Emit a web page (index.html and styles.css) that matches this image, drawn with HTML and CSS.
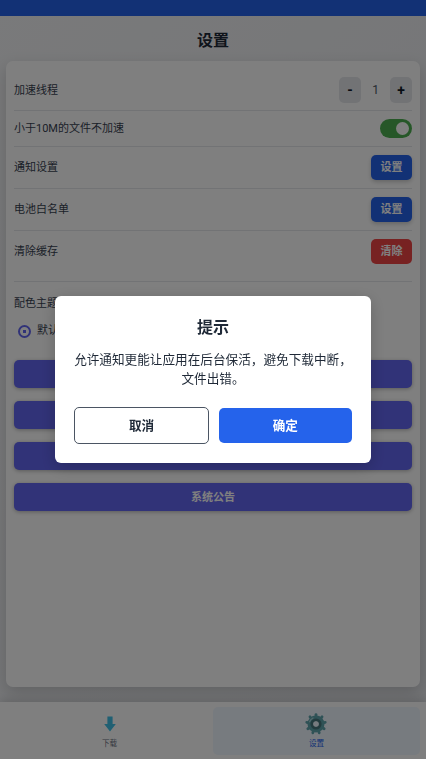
FILE: index.html
```html
<!DOCTYPE html>
<html lang="zh-CN">
<head>
<meta charset="UTF-8">
<meta name="viewport" content="width=device-width, initial-scale=1">
<title>设置</title>
<link rel="stylesheet" href="styles.css">
</head>
<body>
<div class="app">
  <div class="statusbar"></div>
  <header class="header">设置</header>
  <main class="card">
    <div class="row row-threads"><span>加速线程</span>
      <div class="stepper"><button class="step">-</button><span class="value">1</span><button class="step">+</button></div>
    </div>
    <div class="row row-toggle"><span>小于10M的文件不加速</span><div class="toggle"><i></i></div></div>
    <div class="row"><span>通知设置</span><button class="btn">设置</button></div>
    <div class="row"><span>电池白名单</span><button class="btn">设置</button></div>
    <div class="row row-cache"><span>清除缓存</span><button class="btn danger">清除</button></div>
    <section class="theme">
      <div>配色主题</div>
      <div class="option"><span class="radio"></span><span>默认</span></div>
    </section>
    <div class="actions">
      <button class="wide"></button>
      <button class="wide"></button>
      <button class="wide"></button>
      <button class="wide">系统公告</button>
    </div>
  </main>
  <nav class="nav">
    <div class="tab">
      <svg class="icon" viewBox="0 0 24 24"><path fill="#40c0e7" d="M9.400 4.500h5.200v7.600h3.200L12 19.400 6.200 12.100h3.200z"/></svg>
      <span>下载</span>
    </div>
    <div class="tab active">
      <svg class="icon" viewBox="0 0 24 24">
        <g stroke="#5fa5ad" stroke-width="2.800" stroke-linecap="round">
          <path id="tooth" d="M12 5V2.600"/>
          <use href="#tooth" transform="rotate(40 12 12)"/>
          <use href="#tooth" transform="rotate(80 12 12)"/>
          <use href="#tooth" transform="rotate(120 12 12)"/>
          <use href="#tooth" transform="rotate(160 12 12)"/>
          <use href="#tooth" transform="rotate(200 12 12)"/>
          <use href="#tooth" transform="rotate(240 12 12)"/>
          <use href="#tooth" transform="rotate(280 12 12)"/>
          <use href="#tooth" transform="rotate(320 12 12)"/>
        </g>
        <circle cx="12" cy="12" r="6" fill="none" stroke="#5fa5ad" stroke-width="5"/>
        <circle cx="12" cy="12" r="4.200" fill="none" stroke="#46777d" stroke-width="2.800"/>
        <circle cx="12" cy="12" r="2.500" fill="#eff6ff"/>
        <path d="M5.600 9.800C6.200 8 7.200 6.900 9 6" fill="none" stroke="#a9d3d8" stroke-width="1.200" stroke-linecap="round"/>
      </svg>
      <span>设置</span>
    </div>
  </nav>
</div>
<div class="overlay">
  <div class="modal" role="dialog">
    <h2>提示</h2>
    <p>允许通知更能让应用在后台保活，避免下载中断，文件出错。</p>
    <div class="choices"><button class="cancel">取消</button><button class="ok">确定</button></div>
  </div>
</div>
</body>
</html>
```
FILE: styles.css
```css
* { box-sizing: border-box; }
body { margin: 0; font-family: Roboto, "Noto Sans CJK SC", sans-serif; font-size: 11px; line-height: 16px; color: #1f2937; overflow: hidden; }
button { font: inherit; border: 0; padding: 0; margin: 0; color: inherit; }
.app { height: 759px; display: flex; flex-direction: column; background: linear-gradient(135deg, #f3f4f6, #e5e7eb); }
.statusbar { height: 16px; flex: none; background: #2563eb; }
.header { height: 45px; flex: none; text-align: center; font-size: 16px; font-weight: 700; line-height: 50px; }
.card { height: 626px; flex: none; margin: 0 6px; padding: 8px; border-radius: 7px; background: #fff; box-shadow: 0 6px 16px rgba(0,0,0,.17); }
.row { height: 42px; display: flex; align-items: center; justify-content: space-between; border-bottom: 1px solid #e5e7eb; }
.row > span { padding-top: 1px; color: #374151; }
.row-threads { height: 42px; }
.row-threads > span { padding-top: 2px; }
.row-toggle { height: 36px; }
.row-cache { height: 51px; padding-bottom: 9px; }
.stepper { display: flex; align-items: center; }
.step { width: 22px; height: 26px; border-radius: 5px; background: #e5e7eb; font-size: 14px; font-weight: 700; color: #111827; }
.value { width: 29px; text-align: center; font-size: 12px; color: #4b5563; }
.toggle { width: 32px; height: 19px; border-radius: 10px; background: #4caf50; padding: 3px; display: flex; justify-content: flex-end; }
.toggle i { width: 13px; height: 13px; border-radius: 50%; background: #fff; }
.btn { width: 41px; height: 25px; padding-top: 1px; border-radius: 5px; background: #2563eb; color: #fff; font-weight: 700; box-shadow: 0 2px 4px rgba(0,0,0,.2); }
.danger { background: #ef4444; box-shadow: none; }
.theme { padding-top: 14px; height: 78px; color: #374151; }
.option { display: flex; padding: 11px 0 0 4px; gap: 6px; }
.radio { width: 13px; height: 13px; border: 2px solid #6366f1; border-radius: 50%; margin-top: 2px; background: radial-gradient(circle, #6366f1 0 1.5px, transparent 2px); }
.actions { display: grid; gap: 13px; }
.wide { height: 28px; padding-top: 1px; border-radius: 5px; background: #6366f1; color: #fff; font-weight: 700; box-shadow: 0 1px 4px rgba(0,0,0,.3); }
.nav { height: 57px; flex: none; margin-top: auto; padding: 5px 6px 4px; display: flex; background: #fff; box-shadow: 0 -2px 8px rgba(0,0,0,.14); }
.tab { flex: 1; display: flex; flex-direction: column; align-items: center; border-radius: 5px; padding-top: 5px; font-size: 7.600px; line-height: 12px; color: #6b7280; gap: 2px; }
.active { background: #eff6ff; color: #2563eb; }
.icon { width: 24px; height: 24px; }
.active .icon { margin-right: 1px; }
.overlay { position: fixed; inset: 0; display: flex; align-items: center; justify-content: center; background: rgba(0,0,0,.5); }
.modal { width: 316px; height: 167px; padding: 20px 19px 19px; border-radius: 6px; background: #fff; text-align: center; box-shadow: 0 4px 16px rgba(0,0,0,.2); }
.modal h2 { margin: 0; font-size: 16px; line-height: 23px; }
.modal p { margin: 11px 0 19px; font-size: 12.630px; line-height: 19px; }
.choices { display: flex; align-items: center; gap: 9.500px; font-size: 12.600px; font-weight: 700; }
.choices button { padding-top: 1px; }
.cancel { flex: none; width: 135px; height: 37px; border: 1px solid #4b5563; border-radius: 5px; background: #fff; }
.ok { flex: 1; height: 35px; border-radius: 5px; background: #2563eb; color: #fff; }
```
